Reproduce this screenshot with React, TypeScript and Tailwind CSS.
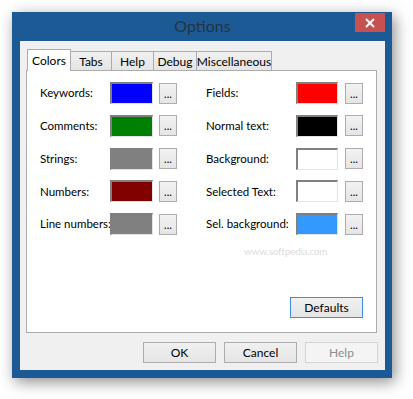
import React from "react";

const font = { fontFamily: 'Lato, "Liberation Sans", sans-serif' };

const left = [
  { label: "Keywords:", color: "bg-[#0000ff]" },
  { label: "Comments:", color: "bg-[#008000]" },
  { label: "Strings:", color: "bg-[#808080]" },
  { label: "Numbers:", color: "bg-[#800000]" },
  { label: "Line numbers:", color: "bg-[#808080]" },
];

const right = [
  { label: "Fields:", color: "bg-[#ff0000]" },
  { label: "Normal text:", color: "bg-[#000000]" },
  { label: "Background:", color: "bg-white" },
  { label: "Selected Text:", color: "bg-white" },
  { label: "Sel. background:", color: "bg-[#3399ff]" },
];

const tabs = ["Colors", "Tabs", "Help", "Debug", "Miscellaneous"];
const tabWidths = ["w-[44px]", "w-[41px]", "w-[42px]", "w-[43px]", "w-[75px]"];

function Swatch({ color, w }: { color: string; w: string }) {
  return (
    <div
      className={`${w} h-[22px] ${color} border-t-2 border-l-2 border-b border-r border-t-[#808080] border-l-[#808080] border-b-[#e3e3e3] border-r-[#e3e3e3]`}
    />
  );
}

function Dots() {
  return (
    <button className="w-[18px] h-[21px] border border-[#adadad] bg-gradient-to-b from-[#f2f2f2] to-[#e5e5e5] flex items-end justify-center pb-[4px] text-[11px] leading-none text-black">
      ...
    </button>
  );
}

function Row({ label, color, labelW, swatchW, gap }: { label: string; color: string; labelW: string; swatchW: string; gap: string }) {
  return (
    <div className="flex items-center h-[22px]">
      <span className={`${labelW} text-[11.5px] text-black whitespace-nowrap`}>{label}</span>
      <Swatch color={color} w={swatchW} />
      <div className={gap} />
      <Dots />
    </div>
  );
}

function Btn({ children, disabled, active }: { children: React.ReactNode; disabled?: boolean; active?: boolean }) {
  const border = active ? "border-[#3c8ee8]" : disabled ? "border-[#d5d5d5]" : "border-[#adadad]";
  return (
    <button
      className={`w-[73px] h-[21px] border ${border} bg-gradient-to-b text-[12px] leading-none ${disabled ? "text-[#8d8d8d] from-[#f4f4f4] to-[#f4f4f4]" : "text-black from-[#f0f0f0] to-[#e5e5e5]"}`}
    >
      {children}
    </button>
  );
}

export default function App() {
  return (
    <div className="w-[413px] h-[399px] bg-white pt-[12px] pl-[12px]" style={font}>
      <div className="w-[380px] h-[366px] bg-[#1c5a96] flex flex-col px-[8px] pr-[7px] pb-[8px] shadow-[3px_4px_14px_rgba(0,0,0,0.45)]">
        {/* title bar */}
        <div className="h-[29px] flex items-start shrink-0">
          <div className="flex-1 h-[28px] flex items-center justify-center pl-[30px]">
            <span className="text-[16px] text-[#27323f]">Options</span>
          </div>
          <div className="w-[30px] h-[19px] mt-px bg-[#c75050] flex items-center justify-center">
            <svg width="10" height="10" viewBox="0 0 10 10">
              <path d="M1 1 L9 9 M9 1 L1 9" stroke="white" strokeWidth="2" />
            </svg>
          </div>
        </div>

        {/* client area */}
        <div className="flex-1 bg-[#f0f0f0] flex flex-col pt-[8px] pl-[6px] pr-[8px] pb-[7px]">
          <div className="flex items-end h-[21px] pl-px relative z-10">
            {tabs.map((t, i) =>
              i === 0 ? (
                <div
                  key={t}
                  className={`${tabWidths[i]} h-[22px] -mb-px bg-white border border-b-0 border-[#acacac] flex items-center justify-center text-[12px] text-black`}
                >
                  {t}
                </div>
              ) : (
                <div
                  key={t}
                  className={`${tabWidths[i]} h-[19px] bg-gradient-to-b from-[#f0f0f0] to-[#e5e5e5] border border-b-0 border-l-0 border-[#acacac] flex items-center justify-center pt-px text-[12px] text-black`}
                >
                  {t}
                </div>
              )
            )}
          </div>
          <div className="h-[263px] bg-white border border-[#acacac] flex flex-col pt-[11px] pl-[13px] pr-[13px] pb-[14px] relative">
            <div className="flex">
              <div className="flex flex-col gap-[10.75px] w-[167px]">
                {left.map((r) => (
                  <Row key={r.label} label={r.label} color={r.color} labelW="w-[70px]" swatchW="w-[43px]" gap="w-[6px]" />
                ))}
              </div>
              <div className="flex flex-col gap-[10.75px]">
                {right.map((r) => (
                  <Row key={r.label} label={r.label} color={r.color} labelW="w-[90px]" swatchW="w-[42px]" gap="w-[7px]" />
                ))}
              </div>
            </div>
            <div className="flex-1 relative">
              <span className="absolute left-[204px] top-[9px] text-[10px] text-[#dcdcdc] tracking-tight">www.softpedia.com</span>
            </div>
            <div className="flex justify-end">
              <Btn active>Defaults</Btn>
            </div>
          </div>
          <div className="flex-1" />
          <div className="flex justify-end gap-[8px] -mr-px">
            <Btn>OK</Btn>
            <Btn>Cancel</Btn>
            <Btn disabled>Help</Btn>
          </div>
        </div>
      </div>
    </div>
  );
}
